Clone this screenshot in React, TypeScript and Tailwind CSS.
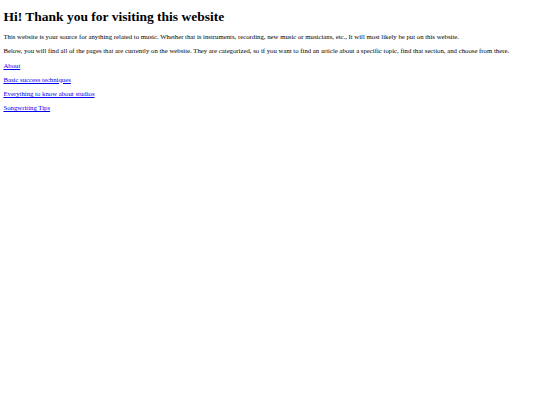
import React from 'react';

const links = ['About', 'Basic success techniques', 'Everything to know about studios', 'Songwriting Tips'];

const App: React.FC = () => {
  return (
    <div className="min-h-[405px] bg-white px-[3.4px] pt-[9px] text-black font-['Liberation_Serif','Times_New_Roman',serif]">
      <h1 className="text-[13.5px] font-bold leading-[1.15] mb-[8.4px]">Hi! Thank you for visiting this website</h1>
      <p className="text-[6.75px] leading-[1.15] mb-[6.55px]">
        This website is your source for anything related to music. Whether that is instruments, recording, new music or musicians, etc., It will most likely be put on this website.
      </p>
      <p className="text-[6.75px] leading-[1.15] mb-[6.55px]">
        Below, you will find all of the pages that are currently on the website. They are categorized, so if you want to find an article about a specific topic, find that section, and choose from there.
      </p>
      {links.map(l => (
        <p key={l} className="text-[6.75px] leading-[1.15] mb-[6.55px]">
          <a href="#" className="text-[#0000ee] underline">{l}</a>
        </p>
      ))}
    </div>
  );
};

export default App;
